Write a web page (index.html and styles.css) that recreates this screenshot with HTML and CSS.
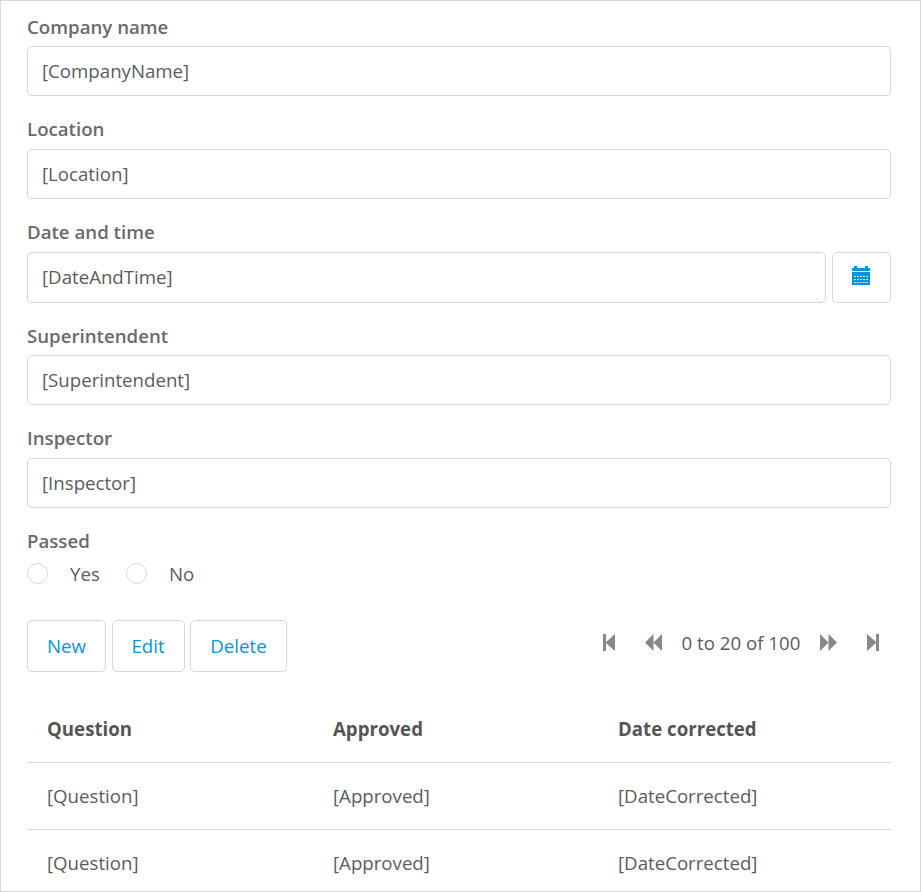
FILE: index.html
```html
<!DOCTYPE html>
<html lang="en">
<head>
<meta charset="utf-8">
<title>Inspection</title>
<link rel="stylesheet" href="styles.css">
</head>
<body>
<main class="page">
  <div class="field field-first"><div class="label">Company name</div><div class="input">[CompanyName]</div></div>
  <div class="field"><div class="label">Location</div><div class="input">[Location]</div></div>
  <div class="field">
    <div class="label">Date and time</div>
    <div class="input-row">
      <div class="input">[DateAndTime]</div>
      <div class="date-button">
        <svg width="18" height="19" viewBox="0 0 18 19" shape-rendering="crispEdges"><path fill="#0595db" d="M2 0h3v2h8V0h3v2h2v3H0V2h2zM0 6h18v13H0z"/><path stroke="#fff" stroke-opacity=".8" stroke-dasharray="2 1" d="M2 10.500h14M2 13.500h14M2 16.500h14"/></svg>
      </div>
    </div>
  </div>
  <div class="field field-short"><div class="label">Superintendent</div><div class="input">[Superintendent]</div></div>
  <div class="field"><div class="label">Inspector</div><div class="input">[Inspector]</div></div>
  <div class="passed">
    <div class="label">Passed</div>
    <div class="radios">
      <span class="radio"></span><span class="radio-text yes">Yes</span>
      <span class="radio"></span><span class="radio-text">No</span>
    </div>
  </div>
  <div class="toolbar">
    <div class="button new">New</div>
    <div class="button edit">Edit</div>
    <div class="button delete">Delete</div>
    <div class="pager">
      <svg class="first" width="12" height="17" viewBox="0 0 12 17"><path d="M0 0h3v8l9-8v17L3 9v8H0z"/></svg>
      <svg width="17" height="17" viewBox="0 0 17 17"><path d="M0 8.500L8.500 0v8.500L17 0v17L8.500 8.500V17z"/></svg>
      <span class="count">0 to 20 of 100</span>
      <svg width="17" height="17" viewBox="0 0 17 17"><path d="M17 8.500L8.500 0v8.500L0 0v17l8.500-8.500V17z"/></svg>
      <svg class="last" width="12" height="17" viewBox="0 0 12 17"><path d="M12 0H9v8L0 0v17l9-8v8h3z"/></svg>
    </div>
  </div>
  <div class="grid">
    <div class="row head"><span>Question</span><span>Approved</span><span>Date corrected</span></div>
    <div class="row"><span>[Question]</span><span>[Approved]</span><span>[DateCorrected]</span></div>
    <div class="row"><span>[Question]</span><span>[Approved]</span><span>[DateCorrected]</span></div>
  </div>
</main>
</body>
</html>
```
FILE: styles.css
```css
* { box-sizing: border-box; }
body { margin: 0; background: #fff; }
.page {
  height: 892px;
  overflow: hidden;
  border: 1px solid #d7d7d7;
  padding: 12px 29px 0 26px;
  font: 18.67px/28px "Open Sans", sans-serif;
  color: #5c5c5c;
}
.field { height: 103px; }
.field-first { height: 102px; }
.label { height: 34px; font-weight: 600; color: #6a6a6a; }
.field-first .label { height: 33px; }
.field-short { padding-top: 1px; }
.field-short .label { height: 33px; }
.input {
  height: 50px;
  border: 1px solid #d7d7d7;
  border-radius: 5px;
  padding: 0 14px;
  line-height: 48px;
}
.input-row { display: flex; gap: 6px; }
.input-row .input { flex: 1; height: 51px; }
.date-button {
  width: 59px;
  height: 51px;
  border: 1px solid #d7d7d7;
  border-radius: 5px;
  display: flex;
  justify-content: center;
  padding: 13px 1px 0 0;
}
.passed { height: 93px; }
.passed .label { height: 32px; }
.radios { display: flex; align-items: center; height: 28px; }
.radio { width: 21px; height: 21px; border: 1px solid #d7d7d7; border-radius: 50%; margin-right: 22px; }
.radio-text { padding-top: 1px; }
.yes { width: 56px; }
.toolbar { display: flex; }
.button {
  height: 52px;
  border: 1px solid #d7d7d7;
  border-radius: 5px;
  color: #0595db;
  line-height: 50px;
  text-align: center;
}
.new { width: 79px; margin-right: 6px; }
.edit { width: 73px; margin-right: 5px; padding-right: 1px; }
.delete { width: 97px; }
.pager { margin-left: auto; margin-right: 12px; height: 45px; display: flex; align-items: center; }
.pager svg { fill: #888; }
.first { margin-right: 30px; }
.count { width: 158px; text-align: center; }
.last { margin-left: 30px; }
.grid { margin-top: 24px; }
.row {
  display: grid;
  grid-template-columns: 286px 285px 1fr;
  height: 67px;
  padding-left: 20px;
  line-height: 66px;
  border-bottom: 1px solid #d7d7d7;
}
.head { font-weight: 700; color: #555; }
.row:last-child { border-bottom: 0; }
```
